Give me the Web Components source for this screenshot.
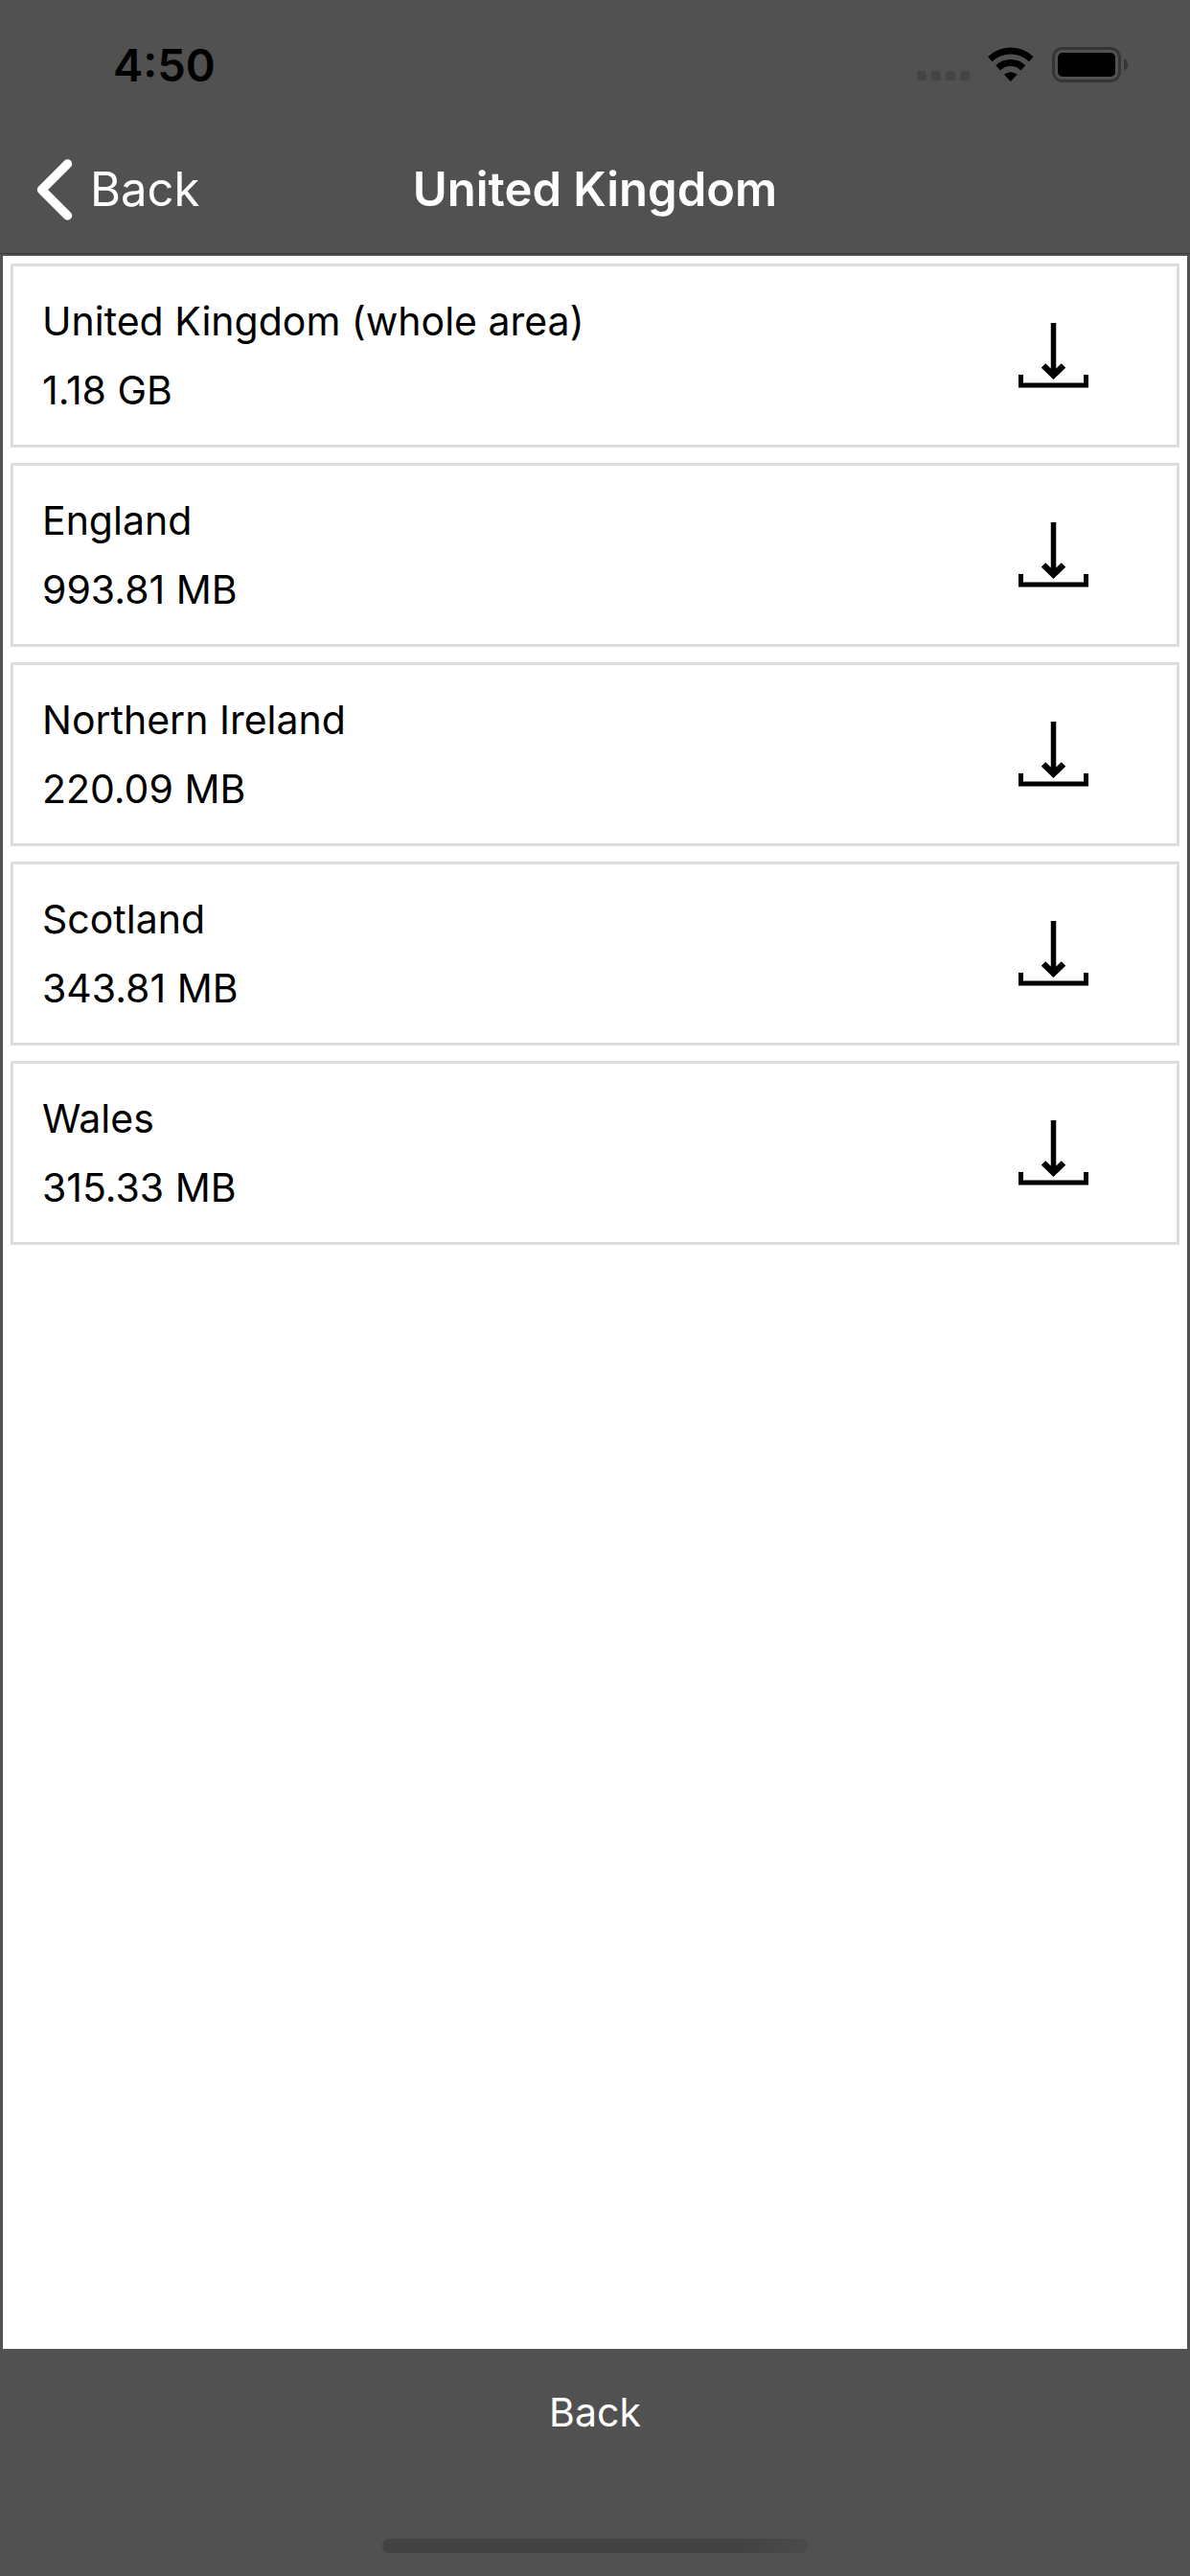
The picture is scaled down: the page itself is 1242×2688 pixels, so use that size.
<!DOCTYPE html>
<html lang="en">
<head>
    <meta charset="utf-8">
    <meta name="viewport" content="width=device-width, initial-scale=1">
    <title>United Kingdom</title>
    <style>
        html,
        body {
            margin: 0;
            min-height: 100%;
        }
        body {
            --bar-color: #515151;
            --bar-line: #3a3a3a;
            --card-border: #dcdcdc;
            font-family: Inter, "Liberation Sans", sans-serif;
            background-color: var(--bar-color);
            color: #000;
        }
    </style>
</head>
<body>

<template id="status-bar-template">
    <style>
        :host {
            display: flex;
            align-items: center;
            justify-content: space-between;
            box-sizing: border-box;
            height: 132px;
            padding: 3px 65px 0 118px;
        }
        .time {
            font-size: 47px;
            font-weight: 600;
            line-height: 56px;
        }
        .indicators {
            display: flex;
            align-items: flex-end;
            gap: 19px;
        }
        svg {
            display: block;
        }
    </style>
    <span class="time"></span>
    <div class="indicators">
        <svg width="55" height="12" viewBox="0 0 55 12" fill="#444" aria-hidden="true">
            <rect x="0" y="0" width="10" height="10" rx="3"/>
            <rect x="15" y="0" width="10" height="10" rx="3"/>
            <rect x="30" y="0" width="10" height="10" rx="3"/>
            <rect x="45" y="0" width="10" height="10" rx="3"/>
        </svg>
        <svg width="48" height="37" viewBox="0 0 48 37" aria-hidden="true">
            <path d="M0 10.2A34 34 0 0 1 47.6 10.2L43 15.3A27.5 27.5 0 0 0 4.6 15.3Z"/>
            <path d="M8.3 19.3A22 22 0 0 1 39.2 19.3L34.5 24.4A15.6 15.6 0 0 0 13 24.4Z"/>
            <path d="M17 28.8A10 10 0 0 1 30.6 28.8L23.8 36Z"/>
        </svg>
        <svg width="79" height="37" viewBox="0 0 79 37" aria-hidden="true">
            <rect x="1.5" y="1.5" width="69" height="34" rx="9.5" fill="none" stroke="#353535" stroke-width="3"/>
            <rect x="6" y="6" width="60" height="25" rx="5"/>
            <path d="M75 12Q79 14 79 18.5T75 25Z" fill="#353535"/>
        </svg>
    </div>
</template>

<template id="nav-bar-template">
    <style>
        :host {
            display: grid;
            grid-template-columns: 1fr auto 1fr;
            align-items: center;
            box-sizing: border-box;
            height: 133px;
            padding: 0 38px;
            border-bottom: 1px solid var(--bar-line);
            color: #fff;
        }
        .back {
            display: flex;
            align-items: center;
            gap: 18px;
            justify-self: start;
            padding: 0;
            border: 0;
            background: none;
            color: inherit;
            font: inherit;
            font-size: 49px;
            line-height: 60px;
            cursor: pointer;
        }
        .title {
            margin: 0;
            font-size: 49px;
            font-weight: 600;
            line-height: 60px;
        }
    </style>
    <button class="back" type="button">
        <svg width="38" height="64" viewBox="0 0 38 64" aria-hidden="true">
            <path d="M32.5 5L5.5 32L32.5 59" fill="none" stroke="#fff" stroke-width="9.5" stroke-linecap="round" stroke-linejoin="round"/>
        </svg>
        <span>Back</span>
    </button>
    <h1 class="title"><slot></slot></h1>
</template>

<template id="region-list-template">
    <style>
        :host {
            display: flex;
            flex: 1;
            flex-direction: column;
            gap: 16px;
            margin: 2px 3px 0;
            padding: 8px;
            background-color: #fff;
        }
    </style>
    <slot></slot>
</template>

<template id="region-item-template">
    <style>
        :host {
            display: flex;
            align-items: center;
            justify-content: space-between;
            box-sizing: border-box;
            padding: 21px 92px 21px 30px;
            border: 3px solid var(--card-border);
        }
        .info {
            font-size: 41px;
            line-height: 72px;
        }
        .download {
            padding: 0;
            border: 0;
            background: none;
            cursor: pointer;
        }
        .download svg {
            display: block;
        }
    </style>
    <div class="info">
        <div class="name"></div>
        <div class="size"></div>
    </div>
    <button class="download" type="button">
        <svg width="73" height="68" viewBox="0 0 73 68" fill="none" stroke="#000" aria-hidden="true">
            <path d="M36.5 0V54" stroke-width="5.5"/>
            <path d="M26 44.5L36.5 54.5L47 44.5" stroke-width="6.5"/>
            <path d="M2.5 54V65H70.5V54" stroke-width="5"/>
        </svg>
    </button>
</template>

<template id="bottom-bar-template">
    <style>
        :host {
            display: flex;
            flex-direction: column;
            align-items: center;
            justify-content: space-between;
            box-sizing: border-box;
            height: 237px;
            padding: 36px 0 24px;
        }
        button {
            padding: 0 40px;
            border: 0;
            background: none;
            color: #fff;
            font: inherit;
            font-size: 41px;
            line-height: 60px;
            cursor: pointer;
        }
        .home-indicator {
            width: 444px;
            height: 15px;
            border-radius: 8px;
            background: linear-gradient(100deg, #434343 85%, #4b4b4b);
        }
    </style>
    <button type="button"><slot></slot></button>
    <div class="home-indicator"></div>
</template>

<template id="region-screen-template">
    <style>
        :host {
            display: flex;
            flex-direction: column;
            min-height: 100vh;
        }
    </style>
    <slot></slot>
</template>

<region-screen>
    <status-bar time="4:50"></status-bar>
    <nav-bar>United Kingdom</nav-bar>
    <region-list>
        <region-item name="United Kingdom (whole area)" size="1.18 GB"></region-item>
        <region-item name="England" size="993.81 MB"></region-item>
        <region-item name="Northern Ireland" size="220.09 MB"></region-item>
        <region-item name="Scotland" size="343.81 MB"></region-item>
        <region-item name="Wales" size="315.33 MB"></region-item>
    </region-list>
    <bottom-bar>Back</bottom-bar>
</region-screen>

<script>
    'use strict';

    class BaseElement extends HTMLElement {
        constructor() {
            super();
            this.attachShadow({ mode: 'open' });
            const template = document.getElementById(this.localName + '-template');
            this.shadowRoot.appendChild(template.content.cloneNode(true));
        }
    }

    class RegionScreen extends BaseElement {}

    class StatusBar extends BaseElement {
        connectedCallback() {
            this.shadowRoot.querySelector('.time').textContent = this.getAttribute('time');
        }
    }

    class NavBar extends BaseElement {
        connectedCallback() {
            this.shadowRoot.querySelector('.back').addEventListener('click', () => history.back());
        }
    }

    class RegionList extends BaseElement {
        connectedCallback() {
            this.setAttribute('role', 'list');
        }
    }

    class RegionItem extends BaseElement {
        static get observedAttributes() {
            return ['name', 'size'];
        }

        connectedCallback() {
            this.setAttribute('role', 'listitem');
            this.render();
        }

        attributeChangedCallback() {
            this.render();
        }

        render() {
            const name = this.getAttribute('name');
            this.shadowRoot.querySelector('.name').textContent = name;
            this.shadowRoot.querySelector('.size').textContent = this.getAttribute('size');
            this.shadowRoot.querySelector('.download').setAttribute('aria-label', 'Download ' + name);
        }
    }

    class BottomBar extends BaseElement {
        connectedCallback() {
            this.shadowRoot.querySelector('button').addEventListener('click', () => history.back());
        }
    }

    customElements.define('region-screen', RegionScreen);
    customElements.define('status-bar', StatusBar);
    customElements.define('nav-bar', NavBar);
    customElements.define('region-list', RegionList);
    customElements.define('region-item', RegionItem);
    customElements.define('bottom-bar', BottomBar);
</script>
</body>
</html>
